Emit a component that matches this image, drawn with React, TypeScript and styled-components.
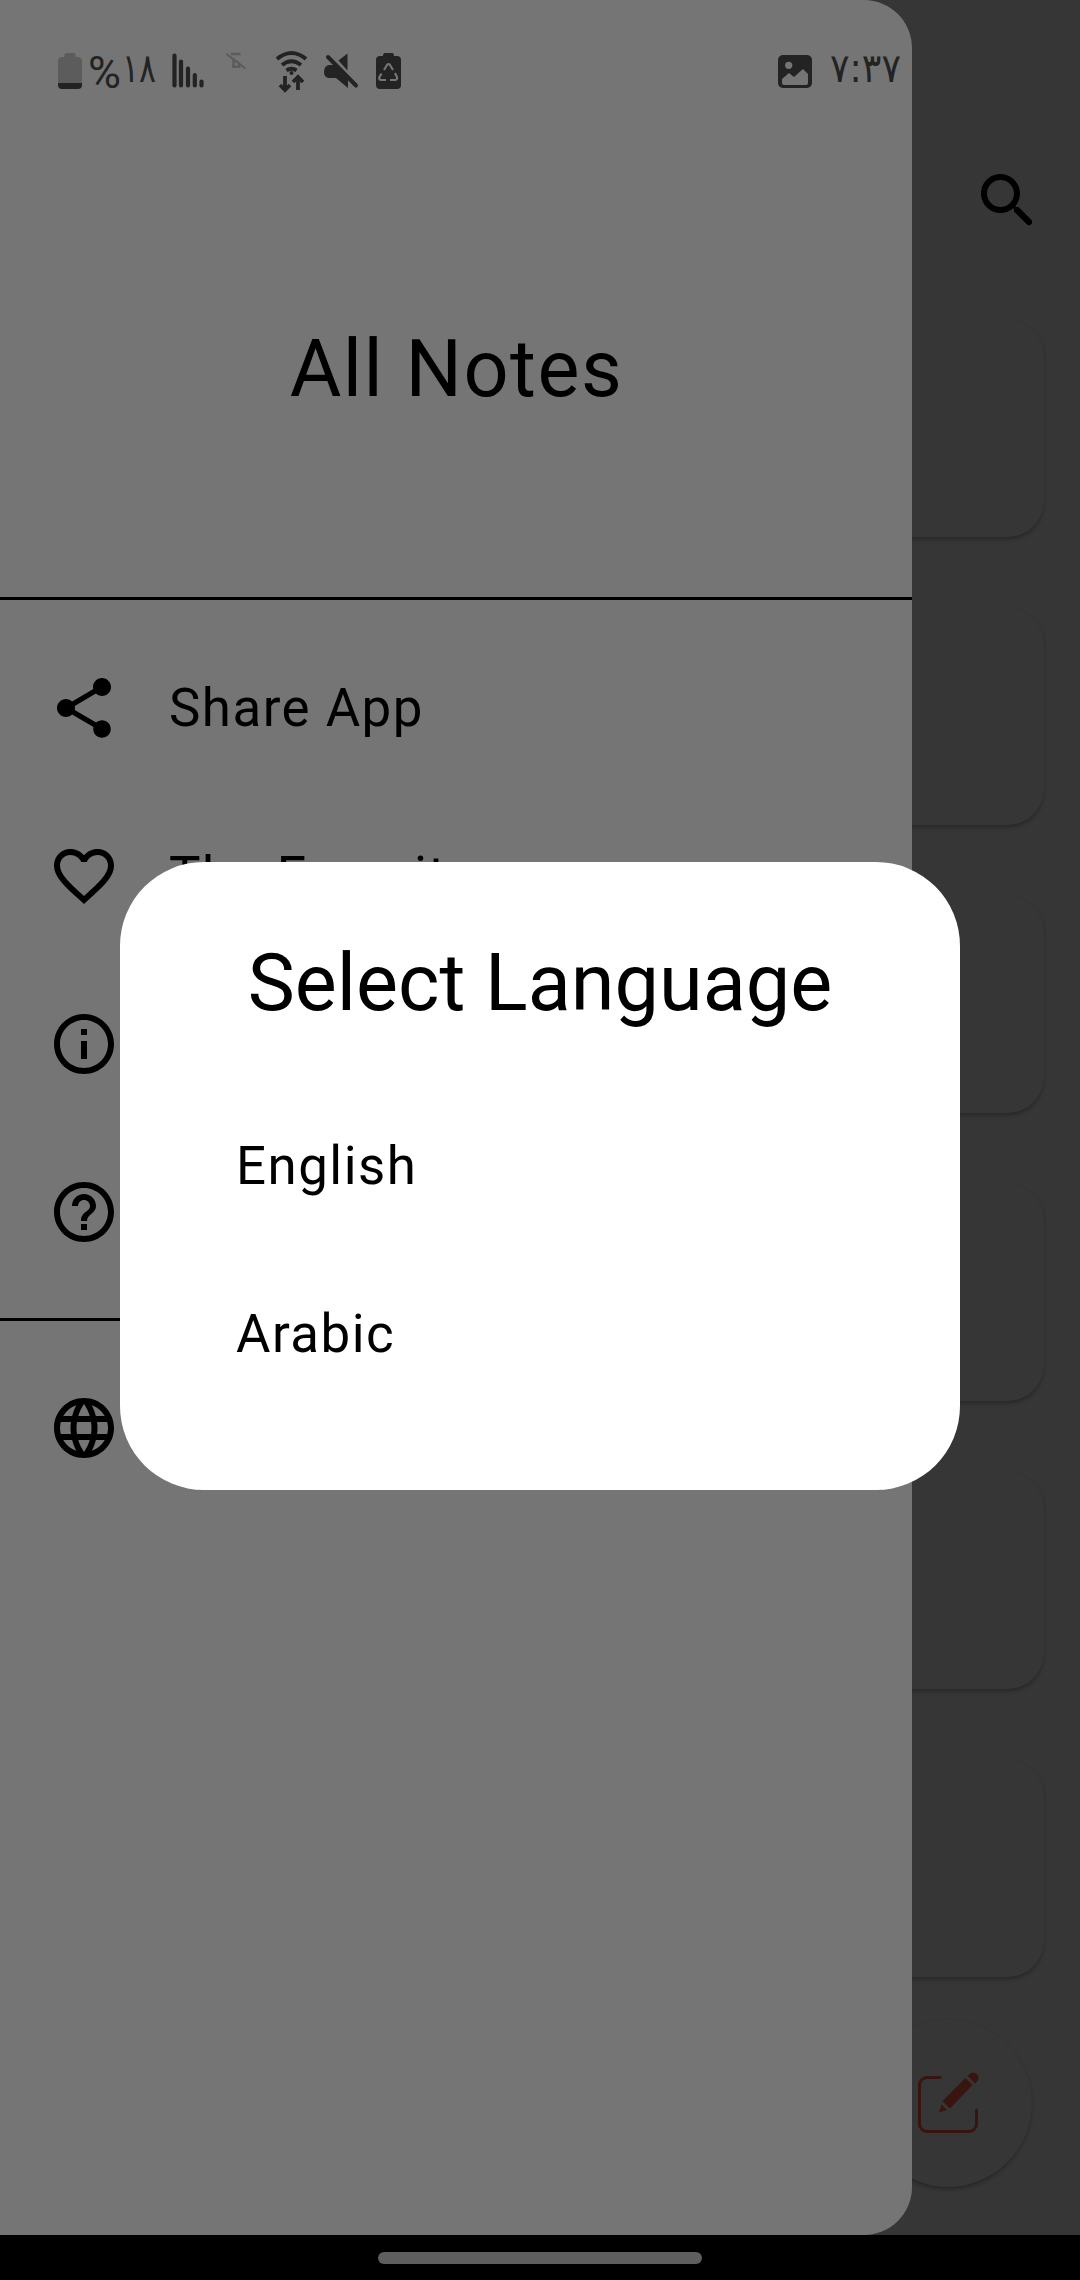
import React from "react";
import styled, { createGlobalStyle } from "styled-components";
import { MdShare, MdFavoriteBorder, MdInfoOutline, MdHelpOutline, MdLanguage } from "react-icons/md";

const GlobalStyle = createGlobalStyle`
  *, *::before, *::after { box-sizing: border-box; }
  body { margin: 0; background: #000; font-family: Roboto, "DejaVu Sans", sans-serif; }
`;

const Screen = styled.div`
  position: relative;
  width: 1080px;
  height: 2280px;
  overflow: hidden;
  background: #000;
  color: #000;
`;

const Page = styled.main`
  height: 2235px;
  display: flex;
  flex-direction: column;
  background: #363636;
`;

const AppBar = styled.header`
  height: 320px;
  flex: none;
  display: flex;
  justify-content: flex-end;
  padding: 165px 36px 0 0;
`;

const CardList = styled.div`
  display: flex;
  flex-direction: column;
  gap: 71px;
  padding: 0 36px;
`;

const Card = styled.div`
  height: 217px;
  border-radius: 36px;
  background: #363636;
  box-shadow: 0 3px 4px -1px rgba(0, 0, 0, 0.3), 0 0 1px rgba(0, 0, 0, 0.1);
`;

const Fab = styled.button`
  position: absolute;
  left: 864px;
  top: 2019px;
  width: 168px;
  height: 168px;
  padding: 0;
  border: 0;
  border-radius: 50%;
  display: flex;
  align-items: center;
  justify-content: center;
  background: #363636;
  box-shadow: 0 3px 4px -1px rgba(0, 0, 0, 0.3), 0 0 1px rgba(0, 0, 0, 0.1);
`;

const Drawer = styled.aside`
  position: absolute;
  left: 0;
  top: 0;
  width: 912px;
  height: 2235px;
  display: flex;
  flex-direction: column;
  background: #757575;
  border-radius: 0 48px 48px 0;
`;

const StatusBar = styled.div`
  height: 142px;
  flex: none;
  display: flex;
  justify-content: space-between;
  color: #232323;
`;

const StatusIcons = styled.svg`
  display: block;
  width: 420px;
  height: 142px;
`;

const StatusClock = styled.svg`
  display: block;
  width: 172px;
  height: 142px;
`;

const DrawerTitle = styled.h1`
  margin: 0;
  height: 433px;
  padding: 180px 0 0 1px;
  font-weight: 400;
  font-size: 79.2px;
  line-height: 94px;
  letter-spacing: 1.5px;
  text-align: center;
`;

const Divider = styled.hr`
  flex: none;
  width: 100%;
  height: 3px;
  margin: ${(p: { $gap: string }) => p.$gap};
  border: 0;
  background: #000;
`;

const MenuItem = styled.div`
  height: 168px;
  flex: none;
  display: flex;
  align-items: center;
  gap: 49px;
  padding: 0 48px;
  font-size: 52.8px;
  line-height: 64px;
  letter-spacing: 1.5px;
`;

const DialogLayer = styled.div`
  position: absolute;
  inset: 0;
  display: flex;
  justify-content: center;
  align-items: flex-start;
  padding-top: 862px;
`;

const Dialog = styled.section`
  width: 840px;
  height: 628px;
  border-radius: 84px;
  background: #fff;
`;

const DialogTitle = styled.h2`
  margin: 0;
  padding: 74px 0 52px;
  font-weight: 400;
  font-size: 79.2px;
  line-height: 94px;
  text-align: center;
`;

const Option = styled.div`
  height: 168px;
  display: flex;
  align-items: center;
  padding-left: 116px;
  font-size: 52.8px;
  line-height: 64px;
  letter-spacing: 1.5px;
`;

const NavBar = styled.footer`
  height: 45px;
  display: flex;
  justify-content: center;
  padding-top: 17px;
  background: #000;
`;

const NavHandle = styled.div`
  width: 324px;
  height: 12px;
  border-radius: 6px;
  background: #5e5e5e;
`;

const SearchIcon = () => (
  <svg width="72" height="72" viewBox="0 0 24 24">
    <path d="M15.5 14h-.79l-.28-.27c1.2-1.4 1.82-3.31 1.48-5.34-.47-2.78-2.79-5-5.59-5.34-4.23-.52-7.79 3.04-7.27 7.27.34 2.8 2.56 5.12 5.34 5.59 2.03.34 3.94-.28 5.34-1.48l.27.28v.79l4.25 4.25c.41.41 1.08.41 1.49 0 .41-.41.41-1.08 0-1.49L15.5 14zm-6 0C7.01 14 5 11.99 5 9.5S7.01 5 9.5 5 14 7.01 14 9.5 11.99 14 9.5 14z" />
  </svg>
);

const EditIcon = () => (
  <svg width="62" height="62" viewBox="917 2072 62 62" fill="#38150f">
    <path d="M940 2077.5H927a7.5 7.5 0 0 0-7.5 7.5v39a7.500 7.500 0 0 0 7.500 7.500h42a7.500 7.500 0 0 0 7.500-7.500v-14" fill="none" stroke="#38150f" strokeWidth="3" strokeLinecap="round" />
    <path d="M965.500 2078l7 7-22.500 23.500-7.500-7.500z" />
    <path d="M967.500 2076l2-2a5 5 0 0 1 7.500 7.500l-2 2z" />
    <path d="M941.500 2104.500l5.500 5.500-8 2.500z" />
  </svg>
);

const menu = [
  { label: "Share App", icon: MdShare },
  { label: "The Favorite", icon: MdFavoriteBorder },
  { label: "", icon: MdInfoOutline },
  { label: "", icon: MdHelpOutline },
];

export default function App() {
  return (
    <>
      <GlobalStyle />
      <Screen>
        <Page>
          <AppBar><SearchIcon /></AppBar>
          <CardList>
            {[0, 1, 2, 3, 4, 5].map((n) => <Card key={n} />)}
          </CardList>
        </Page>
        <NavBar><NavHandle /></NavBar>
        <Fab><EditIcon /></Fab>
        <Drawer>
          <StatusBar>
            <StatusIcons viewBox="0 0 420 142" fill="#232323">
              <path d="M66 53h8q1.500 0 1.500 1.500V57h2.500q4 0 4 4v22H58V61q0-4 4-4h2.500v-2.500Q64.500 53 66 53z" fill="#5c5c5c" />
              <path d="M58 83h24v2q0 4-4 4H62q-4 0-4-4z" />
              <text x="88" y="87.500" fontSize="45" fontFamily="Roboto" textLength="33" lengthAdjust="spacingAndGlyphs">%</text>
              <text x="122" y="82" fontSize="40" fontFamily="DejaVu Sans" textLength="34" lengthAdjust="spacingAndGlyphs">١٨</text>
              <path d="M174.500 55.500v30M181 61.500v24M188 68.500v17M194.800 75v10.500M201.500 81.500v4" stroke="#232323" strokeWidth="4.200" strokeLinecap="round" />
              <g stroke="#5c5c5c" fill="none">
                <path d="M231 54h9.500M233.500 58v9M232 66.800h8.500M235 61.500h3M239 62v5" strokeWidth="2.400" />
                <path d="M226.500 54l19 14.500" strokeWidth="2" />
              </g>
              <g fill="none" stroke="#232323" strokeWidth="4">
                <path d="M277 59q14.500-12 29 0M282 65q9.500-7.500 19 0M286.500 70.500q5-3.500 10 0" />
                <path d="M285 76v14M280 85l5 5 5-5M298 90V77M293 82l5-5 5 5" strokeWidth="3.800" />
              </g>
              <circle cx="291.500" cy="73" r="2" />
              <path d="M347.500 53.500v17l-9-10zM329 65h5l14 14v9l-12-10h-6q-6 0-6-6t5-7z" />
              <path d="M328 57l28 28.500" stroke="#232323" strokeWidth="4" strokeLinecap="round" />
              <path d="M385 53h7q2 0 2 3h3q4 0 4 4v25q0 4-4 4h-17q-4 0-4-4V60q0-4 4-4h3q0-3 2-3z" />
              <path d="M384 70l3-5q1.500-2 3 0l3 5M395 73l2 4q.5 3-2 3h-5M386 80h-5q-2.500-.5-1.500-3l2-3.500" fill="none" stroke="#757575" strokeWidth="2.200" />
            </StatusIcons>
            <StatusClock viewBox="740 0 172 142" fill="#232323">
              <rect x="778" y="55" width="34" height="33" rx="5" />
              <circle cx="788.700" cy="65.300" r="3.600" fill="#757575" />
              <path d="M782 79l7-6 5 4 9-8 5 5v9q0 2-2 2h-22q-2 0-2-2z" fill="#757575" />
              <text x="830" y="82" fontSize="40" fontFamily="DejaVu Sans" textLength="71" lengthAdjust="spacingAndGlyphs">٧:٣٧</text>
            </StatusClock>
          </StatusBar>
          <DrawerTitle>All Notes</DrawerTitle>
          <Divider $gap="22px 0 24px" />
          {menu.map(({ label, icon: Icon }, i) => (
            <MenuItem key={i}><Icon size={72} />{label}</MenuItem>
          ))}
          <Divider $gap="22px 0 23px" />
          <MenuItem><MdLanguage size={72} /></MenuItem>
        </Drawer>
        <DialogLayer>
          <Dialog>
            <DialogTitle>Select Language</DialogTitle>
            <Option>English</Option>
            <Option>Arabic</Option>
          </Dialog>
        </DialogLayer>
      </Screen>
    </>
  );
}
